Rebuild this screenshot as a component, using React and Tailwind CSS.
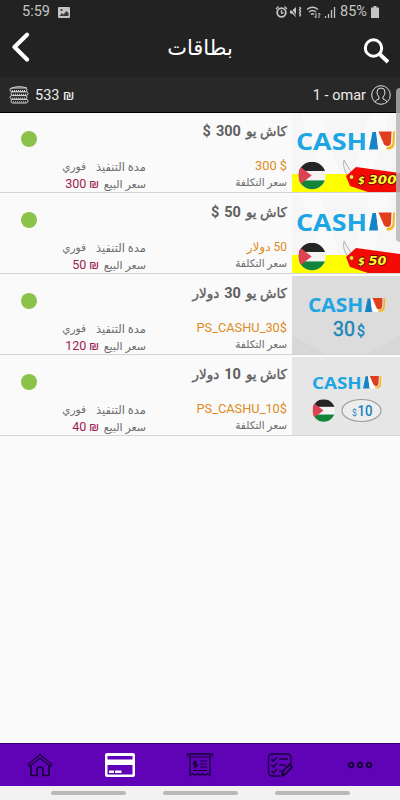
const ARABIC = "font-['Roboto','DejaVu_Sans',sans-serif]";

const cards = [
  { id: 1, number: "300", unit: "$", cost: "300 $", price: "300", art: "tag" },
  { id: 2, number: "50", unit: "$", cost: "50 دولار", rtlCost: true, price: "50", art: "tag" },
  { id: 3, number: "30", unit: "دولار", cost: "PS_CASHU_30$", price: "120", art: "plain" },
  { id: 4, number: "10", unit: "دولار", cost: "PS_CASHU_10$", price: "40", art: "oval" },
];

function CashULogo({ x, y, scale = 1 }) {
  return (
    <g transform={`translate(${x} ${y}) scale(${scale})`}>
      <text
        x="0"
        y="18"
        fontFamily="Open Sans, sans-serif"
        fontWeight="700"
        fontSize="24"
        textLength="71"
        lengthAdjust="spacingAndGlyphs"
        fill="#1ea5e3"
      >
        CASH
      </text>
      <path d="M76.500 .5h4l1.500 17.500h-9z" fill="#1583c5" />
      <path d="M80 .5h4l4 12q1 4 6 5.500H84q-2-2-2.500-6z" fill="#fdfdfd" />
      <path d="M82.500 0h13l-.5 11q-.5 3.500-3.500 3.500-3.500 0-4.500-4z" fill="#e23d1c" />
      <path d="M99 0h-2l-.5 11q-.5 4.500-6 4.700V18h2q5.500-.5 6-5.500z" fill="#f9b61c" />
    </g>
  );
}

function Flag({ cx, cy, r, id }) {
  return (
    <g>
      <clipPath id={id}>
        <circle cx={cx} cy={cy} r={r} />
      </clipPath>
      <g clipPath={`url(#${id})`}>
        <rect x={cx - r} y={cy - r} width={r * 2} height={r * 2} fill="#f4f4f4" />
        <rect x={cx - r} y={cy - r} width={r * 2} height={r * 0.67} fill="#252525" />
        <rect x={cx - r} y={cy + r * 0.36} width={r * 2} height={r} fill="#12843c" />
        <path d={`M${cx - r} ${cy - r * 0.75}L${cx - r * 0.02} ${cy}L${cx - r} ${cy + r * 0.75}z`} fill="#dc4350" />
      </g>
    </g>
  );
}

function TagArt({ amount }) {
  return (
    <svg width="108" height="78" viewBox="0 0 108 78" className="block">
      <rect width="108" height="78" fill="#f6f6f7" />
      <path d="M8 0h20l20 60H32zM60 60L78 0h20L80 60z" fill="#fafafb" />
      <rect y="60" width="108" height="18" fill="#ffff00" />
      <CashULogo x={4} y={17.500} />
      <Flag cx={20} cy={61.500} r={13.700} id={`flag-${amount}`} />
      <path d="M57 63Q50 55 52 46Q56 54 62 62" fill="none" stroke="#a8a8a8" strokeWidth="0.900" />
      <path d="M54 62l10-9 44 6v19H76l-18-6z" fill="#f40a05" />
      <circle cx="59.500" cy="63" r="2.200" fill="#ffe24a" stroke="#9c1208" strokeWidth="0.500" />
      <g
        fontFamily="DejaVu Sans, sans-serif"
        fontWeight="700"
        fontStyle="italic"
        fill="#ffff2e"
        stroke="#4a0600"
        strokeWidth="1.400"
        paintOrder="stroke"
      >
        <text x="66" y="69.500" fontSize="11" textLength="7" lengthAdjust="spacingAndGlyphs">$</text>
        <text x="76.500" y="70" fontSize="13" textLength={amount === "50" ? 18 : 28} lengthAdjust="spacingAndGlyphs">
          {amount}
        </text>
      </g>
    </svg>
  );
}

function PlainArt() {
  return (
    <svg width="108" height="78" viewBox="0 0 108 78" className="block">
      <rect width="108" height="78" fill="#dcdcdd" />
      <path d="M0 60L34 78H0zM108 60L74 78h34z" fill="#d7d7d8" />
      <CashULogo x={16} y={22} scale={0.78} />
      <g fontFamily="Roboto, sans-serif" fill="#1c87b8" stroke="#1c87b8" strokeWidth="0.500">
        <text x="41" y="60" fontSize="20" textLength="22" lengthAdjust="spacingAndGlyphs">30</text>
        <text x="65" y="59.500" fontSize="14">$</text>
      </g>
    </svg>
  );
}

function OvalArt() {
  return (
    <svg width="108" height="78" viewBox="0 0 108 78" className="block">
      <rect width="108" height="78" fill="#e6e6e7" />
      <CashULogo x={20} y={19} scale={0.7} />
      <Flag cx={31.700} cy={53.500} r={11.200} id="flag-10" />
      <ellipse cx="69.500" cy="53.500" rx="19.500" ry="11" fill="#ededee" stroke="#999b9d" strokeWidth="1.200" />
      <g fontFamily="Roboto, sans-serif" fill="#1781ba">
        <text x="60" y="59" fontSize="8.500">$</text>
        <text x="65.500" y="59" fontSize="15" fontWeight="500" textLength="15" lengthAdjust="spacingAndGlyphs">10</text>
      </g>
    </svg>
  );
}

function CardArt({ card }) {
  if (card.art === "tag") return <TagArt amount={card.number} />;
  if (card.art === "plain") return <PlainArt />;
  return <OvalArt />;
}

function CardTitle({ number, unit }) {
  const arabic = "text-[13.500px] [-webkit-text-stroke:0.35px_#5f5f5f]";
  return (
    <div dir="rtl" className="flex h-[37px] items-baseline gap-[5px] leading-[20px] text-[#5f5f5f]">
      <span className={arabic}>كاش يو</span>
      <span className="text-[14.500px] font-bold">{number}</span>
      <span className={unit === "$" ? "text-[14.500px] font-bold" : arabic}>{unit}</span>
    </div>
  );
}

function CardRow({ card }) {
  return (
    <div className="flex h-[81px] border-b border-[#d4d4d4] pt-[2px]">
      <div className="w-[58px] pt-[17px] pl-[21px]">
        <div className="h-4 w-4 rounded-full bg-[#8bc34a]" />
      </div>
      <div dir="rtl" className="w-[88px] pt-[45px] text-[10.500px] whitespace-nowrap text-[#6d6d6d]">
        <div className="flex h-4 leading-4">
          <span className="w-[60px] text-[11.500px]">مدة التنفيذ</span>
          <span>فوري</span>
        </div>
        <div className="flex h-4 items-baseline leading-[17px]">
          <span className="w-[47px] text-[11px]">سعر البيع</span>
          <span dir="ltr" className="text-[12.500px] text-[#9c1c4e]">
            {card.price} ₪
          </span>
        </div>
      </div>
      <div dir="rtl" className="w-[141px] pt-[7px] whitespace-nowrap">
        <CardTitle number={card.number} unit={card.unit} />
        <div className="h-4 text-[12.800px] leading-4 text-[#dd8a22]">
          {card.rtlCost ? (
            <span className="text-[12px]">{card.cost}</span>
          ) : (
            <span dir="ltr" className="inline-block">{card.cost}</span>
          )}
        </div>
        <div className="h-4 text-[10.500px] leading-[18px] text-[#6d6d6d]">سعر التكلفة</div>
      </div>
      <div className="ml-[5px] w-[108px]">
        <CardArt card={card} />
      </div>
    </div>
  );
}

function StatusBar() {
  return (
    <div className="flex h-6 items-center pr-[21px] pl-[22px] text-[#c4c4c4]">
      <span className="w-[36px] text-[14.500px]">5:59</span>
      <svg width="12" height="11" viewBox="0 0 12 11">
        <rect width="12" height="11" rx="1" fill="#c4c4c4" />
        <path d="M1.500 9l2.500-3 1.500 1.500L8.500 4 10.500 6v3z" fill="#222222" opacity=".85" />
        <circle cx="3.500" cy="3" r="1" fill="#222222" />
      </svg>
      <svg className="ml-auto" width="62" height="14" viewBox="0 0 62 14" fill="none" stroke="#c4c4c4">
        <circle cx="6.500" cy="7.500" r="4.300" strokeWidth="1.800" />
        <path d="M6.500 5v3h2M1 4l2.500-2.500M12 4L9.500 1.500" strokeWidth="1.300" />
        <path d="M15 5.500h2l4-3.500v10l-4-3.500h-2z" fill="#c4c4c4" stroke="none" />
        <path d="M15 2l7 10" stroke="#222222" strokeWidth="1" />
        <path d="M24.500 2l1 1.500-1 1.500 1 1.500-1 1.500 1 1.500-1 2" strokeWidth="1.400" />
        <path d="M32 4.500q5.500-4.500 11 0M34 7q3.500-3 7 0M36 9.500q1.500-1.500 3 0" strokeWidth="1.400" />
        <path d="M41 8v5M39.500 11.500l1.500 1.500M44 13V8M44 8l1.500 1.500" strokeWidth="1" />
        <path d="M50.500 13v-2M53.500 13V9M56.500 13V5M59.500 13V2" strokeWidth="1.300" />
      </svg>
      <span className="ml-[3px] w-[31px] text-[14.500px] whitespace-nowrap">85%</span>
      <svg width="8" height="12" viewBox="0 0 8 12" fill="#c4c4c4">
        <path d="M2.500 0h3v1.500H8V12H0V1.500h2.500z" />
      </svg>
    </div>
  );
}

function Header() {
  return (
    <div className="flex h-[53px] items-center justify-between pr-[11px] pl-[12px]">
      <svg width="18" height="30" viewBox="0 0 18 30" fill="none" stroke="#ffffff" strokeWidth="4.200" strokeLinecap="round" strokeLinejoin="round" className="mb-[8px]">
        <path d="M15 2.800L2.500 15 15 27.500" />
      </svg>
      <h1 dir="rtl" className="mb-[5px] ml-[7px] text-[21px] leading-none text-white">بطاقات</h1>
      <svg width="26" height="26" viewBox="0 0 26 26" fill="none" stroke="#ffffff">
        <circle cx="10.500" cy="10" r="8.200" strokeWidth="3" />
        <path d="M16 15.500l9 8.500" strokeWidth="3.800" />
      </svg>
    </div>
  );
}

function AccountBar() {
  return (
    <div className="flex h-[36px] items-center border-b border-black bg-[#282828] pr-[9px] pl-[9px] text-[14.500px] text-[#ededed]">
      <svg width="20" height="18" viewBox="0 0 20 18" fill="none" stroke="#d4d4d4" strokeWidth="1">
        {[0, 1, 2, 3].map((n) => (
          <g key={n} transform={`translate(${n % 2} ${n * 3.8})`}>
            <rect x="1" y="2" width="17" height="3.600" rx="1.800" />
            <path d="M3 4.500h14" strokeDasharray="1 1" />
          </g>
        ))}
        <path d="M2 2.500Q9 -1 18 2" />
      </svg>
      <span className="ml-[6px] pt-[2px]">533 ₪</span>
      <span className="mr-[5px] ml-auto pt-[2px]">1 - omar</span>
      <svg width="20" height="20" viewBox="0 0 20 20" fill="none" stroke="#dddddd" strokeWidth="1">
        <circle cx="10" cy="10" r="9.300" />
        <path d="M4 17q.5-2 4-3v-2Q6 10 6 7q0-4 4-4t4 4q0 3-2 5v2q3.500 1 4 3" />
      </svg>
    </div>
  );
}

function NavBar() {
  return (
    <nav className="grid h-[43px] grid-cols-5 items-center justify-items-center border-t border-[#35007a] bg-[#6002b5]">
      <svg width="26" height="24" viewBox="0 0 26 24" fill="none" stroke="#170038" strokeWidth="1.700" className="mb-px">
        <path d="M1 11.500L13 1.500l12 10M1 11.500l1.500 2L13 5l10.500 8.500 1.500-2" strokeWidth="1.200" />
        <path d="M4 12v10.500h6V17q0-3 3-3t3 3v5.500h6V12" />
      </svg>
      <svg width="30" height="24" viewBox="0 0 30 24" fill="#ffffff" className="mb-px">
        <path fillRule="evenodd" d="M2 0h26q2 0 2 2v20q0 2-2 2H2q-2 0-2-2V2Q0 0 2 0zM2.500 3v3.500h25V3zM2.500 12v9.500h25V12z" />
        <path d="M4 17.500h5V20H4zM10 17.500h6.500V20H10z" />
      </svg>
      <svg width="26" height="24" viewBox="0 0 26 24" fill="none" stroke="#170038" strokeWidth="1.300" className="mb-px">
        <path d="M0.500 3.500V1h25v2.500M3 2v20.500l2.500-2 2.500 2 2.500-2 2.500 2 2.500-2 2.500 2 2.500-2 2.500 2V2" />
        <path d="M3 4h20M13 8h7M13 11h7M13 14h7M6 17.500h14" strokeWidth="1.200" />
        <path d="M10 9.500q-3.500-1.500-3.500.5t3.500 2-3.500 2M8.300 7.500v8" />
      </svg>
      <svg width="26" height="24" viewBox="0 0 26 24" fill="none" stroke="#170038" strokeWidth="1.300" className="mb-px">
        <path d="M13 23H5.500q-4 0-4-4V5q0-4 4-4H20q4 0 4 4v7" />
        <path d="M4.500 6l2 2L10 4M4.500 12l2 2 3.500-4M4.500 18l2 2 3.500-4" strokeWidth="1.500" />
        <path d="M12.500 6H21M12.500 12h6M12.500 18h2" />
        <path d="M15 22.500l1-4.500 6.500-6.500 2.500 2.500-6.500 7z" strokeWidth="1.800" />
        <path d="M15 22.500l.5-3 2 2.200z" fill="#170038" />
      </svg>
      <svg width="26" height="8" viewBox="0 0 26 8" fill="none" stroke="#170038" strokeWidth="1.900" className="mb-px">
        <circle cx="4" cy="4" r="2.200" />
        <circle cx="13" cy="4" r="2.200" />
        <circle cx="22" cy="4" r="2.200" />
      </svg>
    </nav>
  );
}

export default function App() {
  return (
    <div className={`relative flex h-[800px] w-[400px] flex-col overflow-hidden bg-[#fafafa] ${ARABIC}`}>
      <div className="relative z-10 bg-[#222222]">
        <StatusBar />
        <Header />
        <AccountBar />
      </div>
      <main className="-mt-px flex-1">
        {cards.map((card) => (
          <CardRow key={card.id} card={card} />
        ))}
      </main>
      <NavBar />
      <div className="flex h-[14px] gap-[37px] bg-[#f2f2f2] pt-[5px] pl-[51px]">
        <div className="h-1 w-[75px] rounded-full bg-[#b8b8b5]" />
        <div className="h-1 w-[75px] rounded-full bg-[#b8b8b5]" />
        <div className="h-1 w-[75px] rounded-full bg-[#b8b8b5]" />
      </div>
      <div className="absolute top-[88px] right-0 z-20 h-[154px] w-[4px] rounded-l-sm bg-[#b4b4b4]/80" />
    </div>
  );
}
